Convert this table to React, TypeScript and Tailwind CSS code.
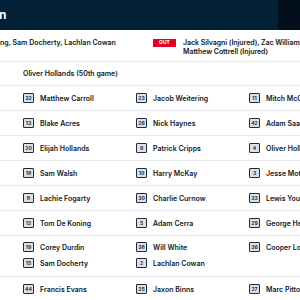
import React from "react";

type P = { n: number; name: string } | null;

const rows: P[][][] = [
  [[{ n: 32, name: "Matthew Carroll" }, { n: 23, name: "Jacob Weitering" }, { n: 11, name: "Mitch McGovern" }]],
  [[{ n: 13, name: "Blake Acres" }, { n: 26, name: "Nick Haynes" }, { n: 42, name: "Adam Saad" }]],
  [[{ n: 20, name: "Elijah Hollands" }, { n: 9, name: "Patrick Cripps" }, { n: 4, name: "Oliver Hollands" }]],
  [[{ n: 18, name: "Sam Walsh" }, { n: 10, name: "Harry McKay" }, { n: 3, name: "Jesse Motlop" }]],
  [[{ n: 8, name: "Lachie Fogarty" }, { n: 30, name: "Charlie Curnow" }, { n: 33, name: "Lewis Young" }]],
  [[{ n: 12, name: "Tom De Koning" }, { n: 5, name: "Adam Cerra" }, { n: 29, name: "George Hewett" }]],
  [
    [{ n: 19, name: "Corey Durdin" }, { n: 38, name: "Will White" }, { n: 36, name: "Cooper Lord" }],
    [{ n: 15, name: "Sam Docherty" }, { n: 2, name: "Lachlan Cowan" }, null],
  ],
  [[{ n: 44, name: "Francis Evans" }, { n: 25, name: "Jaxon Binns" }, { n: 27, name: "Marc Pittonet" }]],
];

function Player({ p }: { p: P }) {
  if (!p) return <div className="w-[113px] shrink-0" />;
  return (
    <div className="w-[113px] shrink-0 flex items-center gap-[6px]">
      <div className="w-[11px] h-[10px] rounded-[1px] border-[1.5px] border-[#1d2b3a] bg-[#dde1e5] flex items-center justify-center text-[5px] font-bold leading-none text-[#1d2b3a]">
        {p.n}
      </div>
      <span className="text-[7px] font-semibold leading-none text-[#111827] whitespace-nowrap">{p.name}</span>
    </div>
  );
}

export default function App() {
  return (
    <div
      className="w-[300px] h-[300px] overflow-hidden bg-white"
      style={{ fontFamily: "Inter, 'Noto Sans', sans-serif" }}
    >
      <div className="w-[420px]">
        {/* header */}
        <div className="h-[30px] flex">
          <div className="w-[278px] bg-[#022036] flex items-center">
            <span className="text-[12px] font-bold text-white leading-none -ml-[1px]">n</span>
          </div>
          <div className="flex-1 bg-[#030f1b]" />
        </div>

        {/* in / out */}
        <div className="h-[32px] border-b border-[#e8eaed] flex pt-[8px]">
          <div className="w-[153px] shrink-0">
            <span className="text-[7px] font-semibold leading-[9px] text-[#111827] whitespace-nowrap block">
              ng, Sam Docherty, Lachlan Cowan
            </span>
          </div>
          <div className="flex gap-[7px]">
            <div className="w-[23px] h-[8px] mt-[0.5px] bg-[#e4002b] flex items-center justify-center text-[5px] font-bold text-white leading-none">
              OUT
            </div>
            <div className="text-[7px] font-semibold leading-[9px] text-[#111827] whitespace-nowrap tracking-[-0.05px]">
              <div>Jack Silvagni (Injured), Zac Williams (Injured),</div>
              <div>Matthew Cottrell (Injured)</div>
            </div>
          </div>
        </div>

        {/* milestone */}
        <div className="h-[24px] border-b border-[#e8eaed] flex items-center pl-[23px]">
          <span className="text-[7px] font-semibold leading-none text-[#111827] whitespace-nowrap">
            Oliver Hollands (50th game)
          </span>
        </div>

        {/* grid */}
        {rows.map((group, gi) =>
          group.length === 1 ? (
            <div key={gi} className="h-[25px] border-b border-[#e8eaed] flex items-center pl-[23px]">
              {group[0].map((p, i) => (
                <Player key={i} p={p} />
              ))}
            </div>
          ) : (
            <div key={gi} className="border-b border-[#e8eaed] pt-[3px] pb-[5px]">
              {group.map((r, ri) => (
                <div key={ri} className="h-[16px] flex items-center pl-[23px]">
                  {r.map((p, i) => (
                    <Player key={i} p={p} />
                  ))}
                </div>
              ))}
            </div>
          )
        )}
      </div>
    </div>
  );
}
